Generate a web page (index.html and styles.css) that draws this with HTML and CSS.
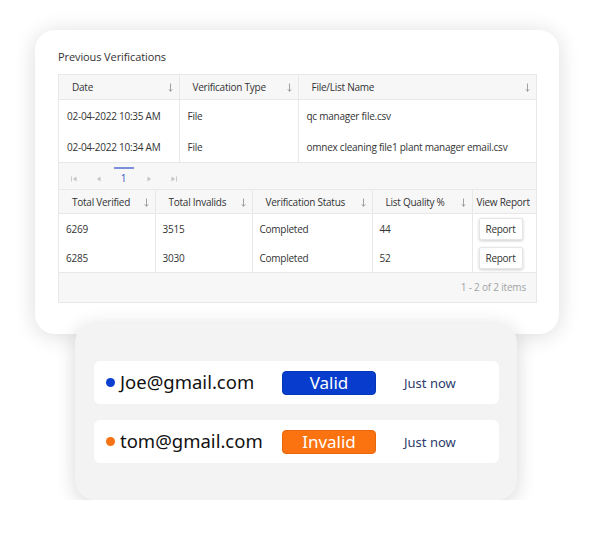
FILE: index.html
```html
<!DOCTYPE html>
<html lang="en">
<head>
    <meta charset="UTF-8">
    <meta name="viewport" content="width=device-width, initial-scale=1.0">
    <title>Previous Verifications</title>
    <link rel="stylesheet" href="styles.css">
</head>
<body>
    <div class="scene">
        <section class="card history">
            <h2 class="card-title">Previous Verifications</h2>

            <div class="grid">
                <table class="tbl tbl-files">
                    <colgroup><col><col><col></colgroup>
                    <thead>
                        <tr>
                            <th><span>Date</span><svg class="sort" viewBox="0 0 5 9"><path d="M2.5 0.5V8.3M0.8 6.4L2.5 8.3L4.2 6.4"/></svg></th>
                            <th><span>Verification Type</span><svg class="sort" viewBox="0 0 5 9"><path d="M2.5 0.5V8.3M0.8 6.4L2.5 8.3L4.2 6.4"/></svg></th>
                            <th><span>File/List Name</span><svg class="sort" viewBox="0 0 5 9"><path d="M2.5 0.5V8.3M0.8 6.4L2.5 8.3L4.2 6.4"/></svg></th>
                        </tr>
                    </thead>
                    <tbody>
                        <tr>
                            <td>02-04-2022 10:35 AM</td>
                            <td>File</td>
                            <td>qc manager file.csv</td>
                        </tr>
                        <tr>
                            <td>02-04-2022 10:34 AM</td>
                            <td>File</td>
                            <td>omnex cleaning file1 plant manager email.csv</td>
                        </tr>
                    </tbody>
                </table>

                <div class="pager">
                    <span class="pg-btn"><svg viewBox="0 0 6 6"><path d="M0.5 0.5V5.5" class="bar"/><path d="M5.5 0.5L2 3L5.5 5.5Z"/></svg></span>
                    <span class="pg-btn"><svg viewBox="0 0 6 6"><path d="M4.5 0.5L1 3L4.5 5.5Z"/></svg></span>
                    <span class="pg-num">1</span>
                    <span class="pg-btn"><svg viewBox="0 0 6 6"><path d="M1.5 0.5L5 3L1.5 5.5Z"/></svg></span>
                    <span class="pg-btn"><svg viewBox="0 0 6 6"><path d="M0.5 0.5L4 3L0.5 5.5Z"/><path d="M5.5 0.5V5.5" class="bar"/></svg></span>
                </div>

                <table class="tbl tbl-stats">
                    <colgroup><col><col><col><col><col></colgroup>
                    <thead>
                        <tr>
                            <th><span>Total Verified</span><svg class="sort" viewBox="0 0 5 9"><path d="M2.5 0.5V8.3M0.8 6.4L2.5 8.3L4.2 6.4"/></svg></th>
                            <th><span>Total Invalids</span><svg class="sort" viewBox="0 0 5 9"><path d="M2.5 0.5V8.3M0.8 6.4L2.5 8.3L4.2 6.4"/></svg></th>
                            <th><span>Verification Status</span><svg class="sort" viewBox="0 0 5 9"><path d="M2.5 0.5V8.3M0.8 6.4L2.5 8.3L4.2 6.4"/></svg></th>
                            <th><span>List Quality %</span><svg class="sort" viewBox="0 0 5 9"><path d="M2.5 0.5V8.3M0.8 6.4L2.5 8.3L4.2 6.4"/></svg></th>
                            <th class="th-plain"><span>View Report</span></th>
                        </tr>
                    </thead>
                    <tbody>
                        <tr>
                            <td>6269</td>
                            <td>3515</td>
                            <td>Completed</td>
                            <td>44</td>
                            <td class="td-btn"><button class="report-btn">Report</button></td>
                        </tr>
                        <tr>
                            <td>6285</td>
                            <td>3030</td>
                            <td>Completed</td>
                            <td>52</td>
                            <td class="td-btn"><button class="report-btn">Report</button></td>
                        </tr>
                    </tbody>
                </table>

                <div class="grid-foot">1 - 2 of 2 items</div>
            </div>
        </section>

        <section class="card live">
            <div class="live-row">
                <div class="who"><span class="dot dot-valid"></span>Joe@gmail.com</div>
                <span class="badge badge-valid">Valid</span>
                <span class="when">Just now</span>
            </div>
            <div class="live-row">
                <div class="who"><span class="dot dot-invalid"></span>tom@gmail.com</div>
                <span class="badge badge-invalid">Invalid</span>
                <span class="when">Just now</span>
            </div>
        </section>
    </div>
</body>
</html>
```

FILE: styles.css
```css
body {
    margin: 0;
    background: #fff;
    font-family: "Open Sans", "Noto Sans", Arial, sans-serif;
    color: #333;
}
.scene {
    padding: 30px 0 0 35px;
}
.card {
    box-sizing: border-box;
    border-radius: 20px;
}
.history {
    width: 524px;
    height: 304px;
    background: #fff;
    padding: 19px 22px 0 23px;
    box-shadow: 0 2px 22px rgba(0,0,0,0.14);
}
.card-title {
    margin: 0 0 10px;
    font-size: 11px;
    line-height: 15px;
    font-weight: normal;
    letter-spacing: -0.1px;
    color: #333;
}
.grid {
    width: 479px;
    border: 1px solid #e8e8e8;
    background: #f7f7f7;
    box-sizing: border-box;
}
.tbl {
    width: 100%;
    border-collapse: collapse;
    table-layout: fixed;
    font-size: 10px;
    letter-spacing: -0.25px;
}
.tbl th {
    height: 24px;
    padding: 0 6px 0 13px;
    font-weight: normal;
    text-align: left;
    color: #333;
    white-space: nowrap;
    background: #f7f7f7;
    border-bottom: 1px solid #e8e8e8;
}
.tbl th span {
    float: left;
    line-height: 14px;
}
.tbl th.th-plain {
    padding-left: 4px;
    padding-right: 0;
}
.tbl th + th,
.tbl td + td {
    border-left: 1px solid #e8e8e8;
}
.sort {
    float: right;
    width: 5px;
    height: 9px;
    margin-top: 3px;
    fill: none;
    stroke: #8a8a8a;
    stroke-width: 0.8;
}
.tbl td {
    background: #fff;
    padding: 0 7px;
    color: #333;
    white-space: nowrap;
}
.tbl tbody tr:last-child td {
    border-bottom: 1px solid #e8e8e8;
}
.tbl-files td {
    height: 31px;
    padding-left: 8px;
}
.tbl-files col:nth-child(1) { width: 120px; }
.tbl-files col:nth-child(2) { width: 119px; }
.tbl-files col:nth-child(3) { width: 238px; }
.tbl-stats col:nth-child(1) { width: 96px; }
.tbl-stats col:nth-child(2) { width: 97px; }
.tbl-stats col:nth-child(3) { width: 120px; }
.tbl-stats col:nth-child(4) { width: 100px; }
.tbl-stats col:nth-child(5) { width: 64px; }
.tbl-stats th {
    height: 23px;
}
.tbl-stats td {
    height: 29px;
}
.tbl .td-btn {
    padding: 0 0 0 2px;
    text-align: left;
}
.report-btn {
    width: 44px;
    height: 22px;
    padding: 0;
    border: 1px solid #e6e6e6;
    border-radius: 2px;
    background: #fff;
    font-family: inherit;
    font-size: 10px;
    letter-spacing: -0.25px;
    color: #333;
    box-shadow: 0 1px 3px rgba(0,0,0,0.2);
    margin-left: 4px;
}
.pager {
    display: flex;
    align-items: stretch;
    height: 26px;
    padding-left: 2px;
    border-bottom: 1px solid #e8e8e8;
}
.pg-btn,
.pg-num {
    width: 25px;
    display: flex;
    align-items: center;
    justify-content: center;
}
.pg-btn {
    padding-top: 6px;
}
.pg-btn svg {
    width: 6px;
    height: 6px;
    fill: #c4c4c4;
}
.pg-btn .bar {
    fill: none;
    stroke: #c4c4c4;
    stroke-width: 0.9;
}
.pg-num {
    position: relative;
    padding-top: 3px;
    font-size: 10px;
    color: #3a55c4;
}
.pg-num::before {
    content: "";
    position: absolute;
    top: 4px;
    left: 3px;
    right: 2px;
    height: 2px;
    background: #7d8fdc;
}
.grid-foot {
    height: 29px;
    line-height: 29px;
    padding-right: 10px;
    text-align: right;
    font-size: 10px;
    letter-spacing: -0.2px;
    color: #a3a3a3;
}
.live {
    position: relative;
    width: 442px;
    height: 177px;
    margin: -11px 0 0 40px;
    padding: 38px 18px 0 19px;
    background: #f3f3f3;
    box-shadow: 0 4px 20px rgba(0,0,0,0.16);
    display: flex;
    flex-direction: column;
    gap: 16px;
    font-family: "Noto Sans", "Open Sans", Arial, sans-serif;
}
.live-row {
    height: 43px;
    background: #fff;
    border-radius: 6px;
    display: flex;
    align-items: center;
    padding-left: 12px;
}
.who {
    width: 176px;
    display: flex;
    align-items: center;
    gap: 5px;
    font-size: 18.5px;
    color: #111;
    margin-top: -3px;
}
.dot {
    width: 9px;
    height: 9px;
    border-radius: 50%;
    margin-top: 2px;
}
.dot-valid { background: #0a3fcf; }
.dot-invalid { background: #f77214; }
.badge {
    width: 94px;
    height: 24px;
    line-height: 22px;
    border-radius: 4px;
    text-align: center;
    font-size: 17px;
    color: #fff;
    box-sizing: border-box;
}
.badge-valid {
    background: #073ccd;
    border: 1px solid #0536b8;
}
.badge-invalid {
    background: #fa7310;
    border: 1px solid #e8670b;
}
.when {
    margin-left: 28px;
    font-size: 13px;
    color: #2b3b6b;
}
```
